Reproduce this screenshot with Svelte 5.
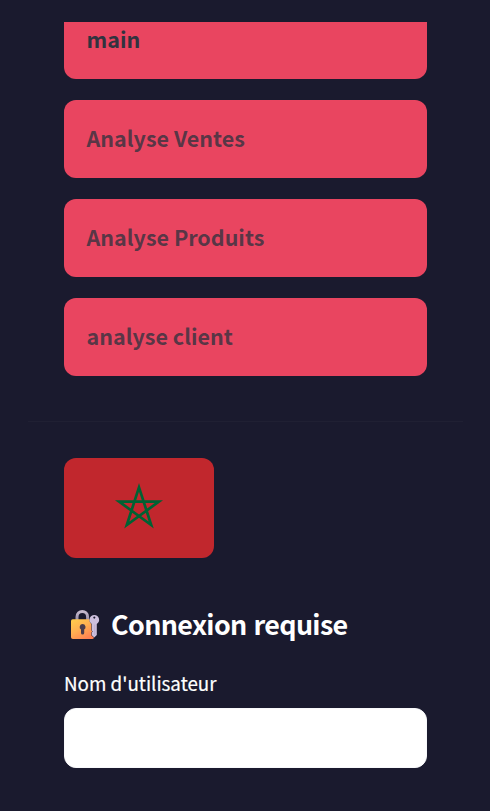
<script>
  const pages = ['main', 'Analyse Ventes', 'Analyse Produits', 'analyse client'];
</script>

<div class="sidebar">
  <div class="viewport">
    <nav>
      {#each pages as page, i}
        <a class="link" class:active={i === 0} href="#{i}"><span>{page}</span></a>
      {/each}
    </nav>
  </div>
  <hr />
  <section>
    <svg class="flag" width="150" height="100" viewBox="0 0 150 100" aria-label="Maroc">
      <rect width="150" height="100" fill="#c1272d" />
      <path d="M75 29.3 L87.2 67 L55.1 43.6 H94.9 L62.8 67 Z" fill="none" stroke="#006233" stroke-width="2.7" />
    </svg>
    <h2>
      <svg class="lock" width="30" height="30" viewBox="0 0 30 30" aria-hidden="true">
        <defs>
          <linearGradient id="body" x1="0" y1="0" x2="0.7" y2="1">
            <stop offset="0" stop-color="#ffce4b" />
            <stop offset="0.5" stop-color="#ffb052" />
            <stop offset="1" stop-color="#ff8052" />
          </linearGradient>
          <linearGradient id="shackle" x1="0" y1="0" x2="0" y2="1">
            <stop offset="0" stop-color="#c5bacd" />
            <stop offset="1" stop-color="#968ba5" />
          </linearGradient>
        </defs>
        <path d="M7 10.5 V7 C7 -0.2 17.6 -0.2 17.6 7 V10.5" fill="none" stroke="url(#shackle)" stroke-width="3" />
        <path d="M2.8 9.3 H19.5 A5.8 5.8 0 0 0 21.4 14.2 V20.2 L22.3 21.5 L21.4 22.6 V25.6 L24 27.8 Q23.6 29 22 29 H2.8 Q1 29 1 27.2 V11.1 Q1 9.3 2.8 9.3Z" fill="url(#body)" />
        <path d="M12.6 14 a3 3 0 0 1 1.6 5.5 V23 a1.6 1.6 0 0 1 -3.2 0 V19.5 A3 3 0 0 1 12.6 14Z" fill="#493b4c" />
        <path fill-rule="evenodd" d="M24.3 5 a4.8 4.8 0 0 1 2.5 8.9 V25 L24.3 27.4 L21.8 25.2 V22.6 L22.8 21.5 L21.8 20.4 V13.9 A4.8 4.8 0 0 1 24.3 5Z M24.3 6.6 a1 1 0 1 0 0.01 0Z" fill="#cdbfdd" />
        <path d="M24.7 14.5 V25" stroke="#b8a8ca" stroke-width="0.7" />
      </svg>
      <span>Connexion requise</span>
    </h2>
    <label for="user">Nom d'utilisateur</label>
    <input id="user" type="text" />
  </section>
</div>

<style>
  :global(body) {
    margin: 0;
    background: #1a1a2e;
  }
  .sidebar {
    box-sizing: border-box;
    height: 811px;
    padding-top: 22px;
    overflow: hidden;
    background: #1a1a2e;
    color: #fff;
    font-family: 'Noto Sans CJK SC', 'Noto Sans', sans-serif;
  }
  .viewport {
    display: flex;
    flex-direction: column;
    justify-content: flex-end;
    height: 354px;
    margin: 0 63px 0 64px;
    overflow: hidden;
  }
  nav {
    display: flex;
    flex-direction: column;
    gap: 21px;
  }
  .link {
    display: flex;
    align-items: center;
    flex: none;
    box-sizing: border-box;
    height: 78px;
    padding: 0 22.5px 2px;
    border-radius: 12px;
    background: #e94560;
    color: rgba(49, 51, 63, 0.8);
    font-size: 21.5px;
    font-weight: 700;
    line-height: 32px;
    text-decoration: none;
    white-space: nowrap;
  }
  .link.active {
    color: #31333f;
  }
  hr {
    height: 1px;
    margin: 45px 27px 36px 28px;
    border: 0;
    background: #202033;
  }
  section {
    display: flex;
    flex-direction: column;
    margin: 0 63px 0 64px;
  }
  .flag {
    display: block;
    border-radius: 12px;
  }
  h2 {
    display: flex;
    align-items: center;
    height: 36px;
    margin: 48px 0 0;
    padding-left: 6px;
    gap: 11px;
    font-size: 26.9px;
    font-weight: 700;
    letter-spacing: -0.65px;
    word-spacing: 1.4px;
    line-height: 36px;
    white-space: nowrap;
  }
  .lock {
    position: relative;
    top: 0.5px;
    flex: none;
  }
  label {
    margin-top: 26px;
    height: 30px;
    font-size: 18.8px;
    line-height: 30px;
    white-space: nowrap;
    -webkit-text-stroke: 0.2px #fff;
  }
  input {
    box-sizing: border-box;
    width: 100%;
    height: 60px;
    margin: 10px 0 0;
    padding: 0 18px;
    border: 1px solid #f8f9fb;
    border-radius: 12px;
    background: #fff;
    font: inherit;
  }
</style>
